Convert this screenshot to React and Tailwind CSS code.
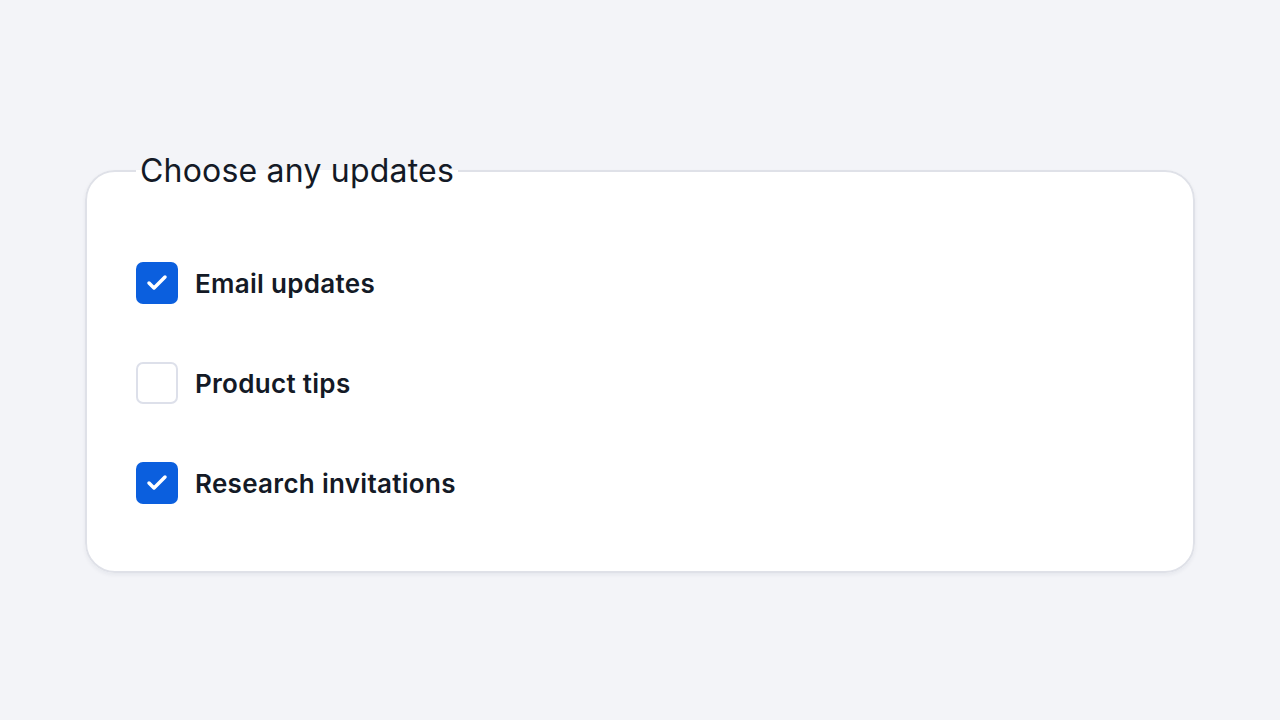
import { Check } from 'lucide-react'

const options = [
  { label: 'Email updates', checked: true },
  { label: 'Product tips', checked: false },
  { label: 'Research invitations', checked: true },
]

function Option({ label, checked }) {
  return (
    <label className="flex items-center gap-[17px] h-[42px]">
      <span
        className={`w-[42px] h-[42px] rounded-[7px] flex items-center justify-center ${
          checked ? 'bg-[#0b5fde]' : 'bg-white border-2 border-[#dde0ea]'
        }`}
      >
        {checked && <Check className="w-[24px] h-[24px] text-white" strokeWidth={3.5} />}
      </span>
      <span className="text-[26px] font-semibold text-[#141a26] tracking-[0.3px]">{label}</span>
    </label>
  )
}

export default function App() {
  return (
    <div className="w-full h-[720px] bg-[#f3f4f8] pt-[151px] px-[85px]" style={{ fontFamily: 'Inter, "Noto Sans", sans-serif' }}>
      <fieldset className="bg-white border-2 border-[#dfe1e8] rounded-[30px] pl-[49px] pr-[48px] pt-[71px] shadow-[0_2px_4px_rgba(20,30,60,0.06)] h-[422px]">
        <legend className="px-[4px] text-[32px] font-normal text-[#141a26] leading-[40px] tracking-[0.2px]">Choose any updates</legend>
        <div className="flex flex-col gap-[58px]">
          {options.map((o) => (
            <Option key={o.label} {...o} />
          ))}
        </div>
      </fieldset>
    </div>
  )
}
